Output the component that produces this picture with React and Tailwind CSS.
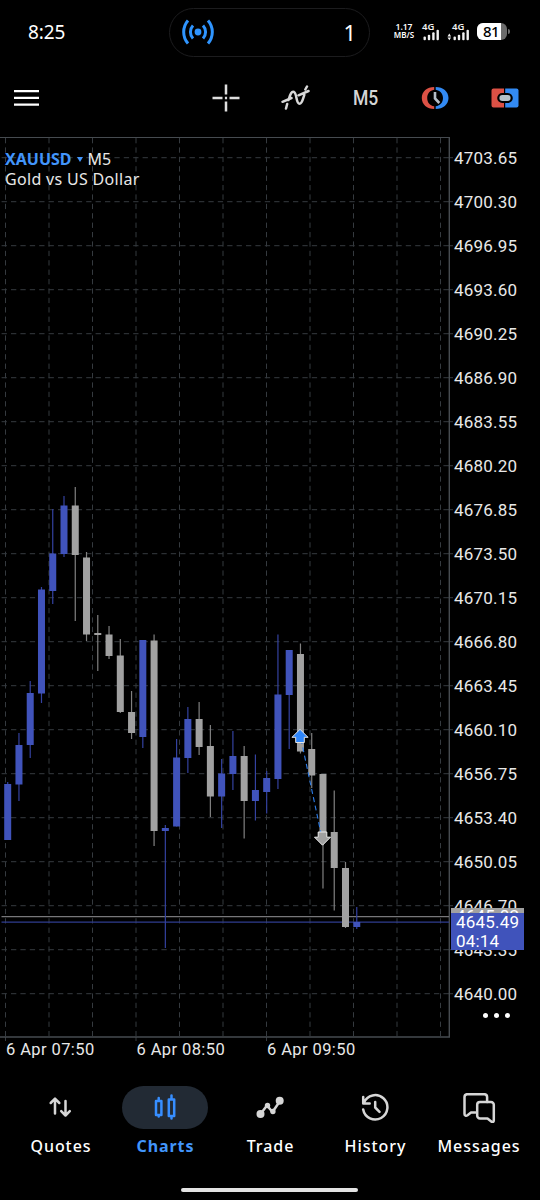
import React from "react";

// [type, high, bodyTop, bodyBottom, low]
const candles = [
  ["up", 782, 784, 840, 840],
  ["up", 733, 745, 784.5, 801],
  ["up", 681, 693, 745, 758],
  ["up", 587, 589.5, 693.5, 703],
  ["up", 509, 553.5, 591, 604],
  ["up", 496, 505.5, 554, 557],
  ["down", 487, 505.5, 555, 621],
  ["down", 552, 557.5, 634.5, 641],
  ["down", 615, 633, 635, 671],
  ["down", 626, 634.5, 656, 659],
  ["down", 639, 655.5, 712, 713],
  ["down", 691, 712, 733, 739],
  ["up", 640, 640, 737, 748],
  ["down", 634.5, 640.5, 831, 846],
  ["up", 825, 828, 831, 948],
  ["up", 739, 757.5, 826.5, 826.5],
  ["up", 707, 719, 758, 773],
  ["down", 702, 719, 747, 755],
  ["down", 725, 746, 796.5, 817],
  ["up", 759, 773.5, 796.5, 828],
  ["up", 731, 756, 774, 790],
  ["down", 746, 756, 801, 838.5],
  ["up", 754.5, 790, 801, 820.5],
  ["up", 771, 778, 792, 813.5],
  ["up", 634.5, 694.5, 779, 789],
  ["up", 650, 650, 695, 749],
  ["down", 643.5, 654, 751.5, 753.5],
  ["down", 733, 749, 775.5, 788],
  ["down", 774, 774, 832, 888.5],
  ["down", 790.5, 832, 868, 910.5],
  ["down", 862, 868, 927, 928],
  ["up", 907, 922, 927, 929],
];

const prices = [
  "4703.65", "4700.30", "4696.95", "4693.60", "4690.25", "4686.90", "4683.55",
  "4680.20", "4676.85", "4673.50", "4670.15", "4666.80", "4663.45", "4660.10",
  "4656.75", "4653.40", "4650.05", "4646.70", "4643.35", "4640.00",
];

const times = ["6 Apr 07:50", "6 Apr 08:50", "6 Apr 09:50"];

const StatusBar = () => (
  <div className="flex h-[64px] items-center font-['Noto_Sans',sans-serif]">
    <div className="w-[169px] pl-[28px] text-[19px] tracking-[-0.1px]">8:25</div>
    <div className="flex h-[49px] w-[201px] items-center justify-between rounded-full border border-[#1c1c1e] pr-[13px] pl-[11px]">
      <svg width="34" height="26" viewBox="0 0 34 26" fill="none" stroke="#2f95ff" strokeWidth="3">
        <circle cx="17" cy="13" r="3.4" fill="#2f95ff" stroke="none" />
        <path d="M12 6.5a9.5 9.5 0 0 0 0 13M22 6.5a9.5 9.5 0 0 1 0 13M7 1.5a17.5 17.5 0 0 0 0 23M27 1.5a17.5 17.5 0 0 1 0 23" />
      </svg>
      <span className="text-[22px]">1</span>
    </div>
    <div className="ml-[22px] flex w-[24px] flex-col items-center pb-[2px] text-[8.5px] leading-[8px] font-semibold whitespace-nowrap">
      <div>1.17</div>
      <div className="text-[8px]">MB/S</div>
    </div>
    <Signal className="mb-[1px] ml-[6px]" />
    <Signal className="mb-[1px] ml-[7px]" data />
    <div className="mb-[2px] ml-[7px] flex items-center">
      <div className="flex h-[17px] w-[30px] rounded-[6px] bg-[#6b6b6b]">
        <div className="flex w-[24px] items-center justify-center rounded-l-[6px] bg-white pl-[4px] text-[15px] leading-[17px] font-medium tracking-[-0.7px] text-black">
          81
        </div>
      </div>
      <div className="ml-[1px] h-[5px] w-[1.5px] rounded-r bg-[#6b6b6b]" />
    </div>
  </div>
);

const Signal = ({ className, data }) => (
  <svg className={`overflow-visible ${className}`} width={data ? 23 : 18} height="20" viewBox={data ? "-6 -2 23 20" : "-1 -2 18 20"} fill="#f2f2f2">
    <text x="-1" y="6.3" fontSize="9.5" fontWeight="600" fontFamily="Noto Sans">4G</text>
    <rect x="0.5" y="12.5" width="2.4" height="3.7" rx="1" />
    <rect x="4.8" y="10.7" width="2.4" height="5.5" rx="1" />
    <rect x="9.2" y="8.2" width="2.4" height="8" rx="1" />
    <rect x="13.5" y="5.7" width="2.4" height="10.5" rx="1" />
    {data && <path d="M-5.5 12.4l1.8-2.8 1.8 2.8zM-5.5 13.4l1.8 2.8 1.8-2.8z" />}
  </svg>
);

const Toolbar = () => (
  <div className="flex h-[73px] items-center pb-[5px]">
    <svg className="ml-[14px]" width="25" height="18" viewBox="0 0 25 18" stroke="#fff" strokeWidth="2.3">
      <path d="M0 2.2h25M0 8.9h25M0 15.6h25" />
    </svg>
    <svg className="ml-[173px]" width="28" height="28" viewBox="0 0 28 28" stroke="#dedede" strokeWidth="2.5">
      <path d="M14 .5v10M14 17.5v10M.5 14h10M17.5 14h10M12.9 14h2.2" />
    </svg>
    <svg className="ml-[41px]" width="30" height="28" viewBox="0 0 30 28" fill="none" stroke="#d8d8d8" strokeWidth="2.5" strokeLinecap="round">
      <path d="M1.5 17.8L10.5 14M17.5 11.3l10-4.3M5 24.5l1.200-4.500M7.500 16C9.300 9.500 10.800 7 13 8c3.200 1.700 1.800 11.800 5.500 11.800 2.700 0 3.500-5 4.800-9M24.300 5.500L26 2.500" />
    </svg>
    <div className="ml-[42px] w-[28px] origin-left scale-x-90 pt-[2px] font-[Roboto,sans-serif] text-[19.5px] font-medium text-[#d5d5d5]">M5</div>
    <svg className="ml-[40px]" width="28" height="24" viewBox="0 0 28 24" fill="none">
      <path d="M13.2 1C6 1 .8 5.600 .8 12s5.200 11 12.400 11v-2.700C8.700 19.500 6.200 16.500 6.200 12s2.500-7.500 7-8.300z" fill="#dc5145" />
      <path d="M14.700 1C22 1 27.500 5.600 27.500 12S22 23 14.700 23v-2.700c4.500-.8 7.300-3.800 7.300-8.300s-2.800-7.500-7.300-8.300z" fill="#328af3" />
      <path d="M14 6v6.500l4.300 4.500" stroke="#b5bec8" strokeWidth="2.600" />
    </svg>
    <svg className="ml-[42px]" width="28" height="24" viewBox="0 0 28 24">
      <path d="M2.500 2.500H13v19H2.500a2 2 0 0 1-2-2v-15a2 2 0 0 1 2-2z" fill="#dc5145" />
      <path d="M14.200 2.500h11.300a2 2 0 0 1 2 2v15a2 2 0 0 1-2 2H14.200z" fill="#328af3" />
      <rect x="7.300" y="8" width="13.400" height="8" rx="4" fill="#b5c1c9" stroke="#000" strokeWidth="2.200" />
    </svg>
  </div>
);

const Chart = () => (
  <svg className="block shrink-0" width="456" height="904" viewBox="0 137 456 904">
    <g stroke="#353a3f" strokeDasharray="5.3 4.1">
      {prices.map((p, i) => (
        <path key={p} d={`M1.6 ${157.7 + i * 44}H447`} />
      ))}
      {Array.from({ length: 11 }, (_, i) => (
        <path key={i} d={`M${5.5 + i * 43.5} 138V1036`} />
      ))}
    </g>
    <g stroke="#353a3f">
      {prices.map((p, i) => (
        <path key={p} d={`M447 ${157.7 + i * 44}h6`} />
      ))}
      <path d="M5.5 1037v4M136 1037v4M266.5 1037v4" />
    </g>
    <path d="M0 137.3H449.3V1037H0" fill="none" stroke="#464b50" strokeWidth="1.4" />
    <path d="M1.5 916.7H449" stroke="#77777a" strokeWidth="1.2" />
    <path d="M1.5 922.2H449" stroke="#2f3c8f" strokeWidth="1.2" />
    {candles.map(([type, high, top, bottom, low], i) => {
      const x = 7.7 + i * 11.26;
      return (
        <g key={i}>
          <path d={`M${x} ${high}V${low}`} stroke={type === "up" ? "#3442a0" : "#808080"} strokeWidth="1.2" />
          <rect x={x - 3.5} y={top} width="7" height={bottom - top} fill={type === "up" ? "#4053bb" : "#a1a1a1"} />
        </g>
      );
    })}
    {/* closed trade, entry to exit */}
    <path d="M301 739L322 838" stroke="#2e7eea" strokeWidth="1.1" strokeDasharray="5 3.5" />
    <path d="M300 729.3l8 8h-3.700v5.200h-8.600v-5.200H292z" fill="#2e86fb" stroke="#e4e4e4" />
    <path d="M322.500 845.200l-8-8h3.700V832h8.600v5.200h3.700z" fill="#a1a1a1" stroke="#eee" />
  </svg>
);

const PriceAxis = () => (
  <div className="relative h-[904px] w-[84px] shrink-0">
    <div className="-ml-[2px]">
      {prices.map((p) => (
        <div key={p} className="h-[44px] leading-[42px]">{p}</div>
      ))}
    </div>
    <div className="absolute top-[771px] -left-[5px] h-[12px] w-[73px] overflow-hidden bg-[#a1a1a1] pl-[5px] leading-[17px] text-white">4645.82</div>
    <div className="absolute top-[776px] -left-[5px] h-[37px] w-[73px] bg-[#4053bb] pl-[5px] leading-[18.5px] text-white">
      <div>4645.49</div>
      <div>04:14</div>
    </div>
    <div className="absolute top-[876px] left-[27px] flex gap-[6px]">
      <span className="size-[5px] rounded-full bg-white" />
      <span className="size-[5px] rounded-full bg-white" />
      <span className="size-[5px] rounded-full bg-white" />
    </div>
  </div>
);

const icons = {
  Quotes: (
    <path d="M9 20.500V6M4.700 10L9 5.700l4.300 4.300M19.500 8v14M15.200 18.200l4.300 4.300 4.300-4.300" />
  ),
  Charts: (
    <path d="M8.700 5v2M8.700 22v1.500M6 8h5.400v14H6zM21.500 2.500V6M21.500 23v2.500M18.800 6.500h5.400V23h-5.400z" />
  ),
  Trade: (
    <>
      <path d="M5.500 21L12 12.500l5.500 6.500L25 8" />
      <g fill="currentColor" stroke="none">
        <circle cx="5.500" cy="21" r="4" />
        <circle cx="12.500" cy="12.500" r="2.700" />
        <circle cx="17.900" cy="18.500" r="2.700" />
        <circle cx="24.700" cy="7.700" r="4" />
      </g>
    </>
  ),
  History: (
    <path d="M4 9.500A12.200 12.200 0 1 1 3.200 16.500M3.200 4v6.500h6.500M15.200 9v5.500l4.300 4.300" />
  ),
  Messages: (
    <>
      <path d="M13.500 19.500H9l-3.500 2.700c-1.400 1-3 .4-3-1.200V4a2.800 2.800 0 0 1 2.800-2.800h17A2.800 2.800 0 0 1 25.100 4v5" />
      <path d="M18 9h11a2.800 2.800 0 0 1 2.800 2.800V27.500c0 1.700-1.500 2-2.500 1L25.500 25.500H18a2.800 2.800 0 0 1-2.800-2.800V11.800A2.800 2.800 0 0 1 18 9z" />
    </>
  ),
};

const BottomNav = () => (
  <div className="grid h-[100px] grid-cols-[121px_88px_122px_88px_119px] pt-[16px]">
    {Object.keys(icons).map((name) => {
      const active = name === "Charts";
      return (
        <div key={name} className={`flex flex-col items-center ${active ? "text-[#378eff]" : "text-[#d6d6d6]"}`}>
          <div className={`flex h-[43px] w-[86px] items-center justify-center rounded-full ${active ? "bg-[#222a34]" : ""}`}>
            <svg
              width={name === "Messages" ? 34 : 30}
              height="30"
              viewBox={name === "Messages" ? "0 0 34 30" : "0 0 30 30"}
              fill="none"
              stroke="currentColor"
              strokeWidth="2.5"
              strokeLinecap="round"
              strokeLinejoin="round"
            >
              {icons[name]}
            </svg>
          </div>
          <span
            className={`mt-[5px] font-['Noto_Sans',sans-serif] text-[16px] leading-[24px] whitespace-nowrap ${
              active ? "pl-[1px] font-bold tracking-[0.9px] text-[#4295fb]" : "pl-[1px] font-medium tracking-[0.95px] text-white"
            }`}
          >
            {name}
          </span>
        </div>
      );
    })}
  </div>
);

const App = () => {
  return (
    <div className="h-[1200px] w-[540px] overflow-hidden bg-black text-white">
      <StatusBar />
      <Toolbar />
      <div className="relative flex font-[Roboto,sans-serif] text-[17px] tracking-[0.2px] text-[#e8e8e8]">
        <Chart />
        <PriceAxis />
        <div className="absolute top-[12px] left-[5px] font-['Noto_Sans',sans-serif] text-[16px] leading-[20px]">
          <div className="flex items-center tracking-normal">
            <span className="font-bold text-[#4295fb]">XAUUSD</span>
            <span className="mx-[5px] size-0 border-x-[3px] border-t-[5px] border-x-transparent border-t-[#4295fb]" />
            <span>M5</span>
          </div>
          <div className="tracking-[0.32px]">Gold vs US Dollar</div>
        </div>
      </div>
      <div className="flex h-[29px] pl-[6px] font-[Roboto,sans-serif] text-[16.5px] leading-[18px] tracking-[0.4px] text-[#e8e8e8]">
        {times.map((t) => (
          <div key={t} className="w-[130.5px]">{t}</div>
        ))}
      </div>
      <BottomNav />
      <div className="mt-[18px] ml-[181px] h-[4px] w-[177px] rounded-full bg-[#e3e3e3]" />
    </div>
  );
};

export default App;
